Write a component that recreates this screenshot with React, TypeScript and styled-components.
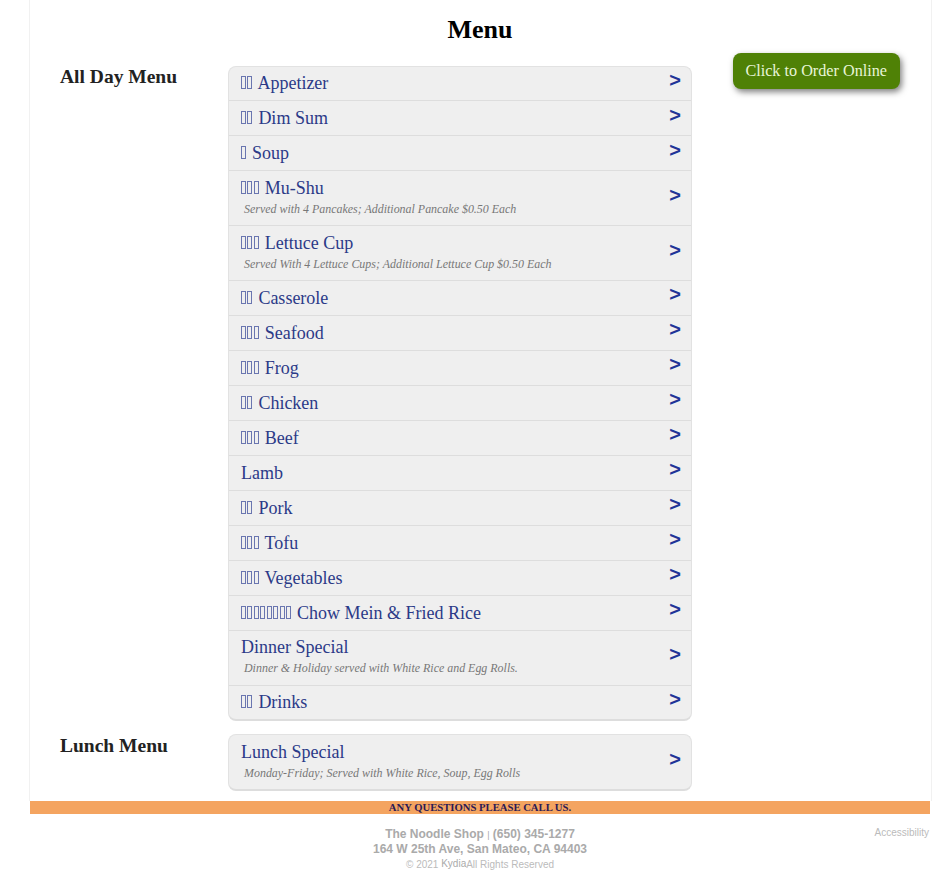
import React from 'react';
import styled, { createGlobalStyle } from 'styled-components';

const GlobalStyle = createGlobalStyle`
  html, body {
    margin: 0;
    padding: 0;
    background: #fff;
    font-family: "Liberation Serif", serif;
  }
`;

const Page = styled.div`
  width: 900px;
  margin-left: 30px;
  height: 877px;
`;

const Frame = styled.div`
  height: 801px;
  margin-right: -1px;
  padding-right: 1px;
  box-shadow: -1px 0 0 #f1f1f1, 1px 0 0 #f1f1f1;
`;

const Title = styled.h1`
  margin: 0;
  padding-top: 15px;
  height: 51px;
  font-size: 26px;
  line-height: 30px;
  font-weight: bold;
  text-align: center;
  color: #000;
`;

const Columns = styled.div`
  display: grid;
  grid-template-columns: 168px 464px 1fr;
  padding-left: 30px;
`;

const SectionName = styled.h2<{ $top?: number }>`
  margin: 0;
  padding-top: ${(p) => p.$top ?? 0}px;
  font-size: 19.5px;
  line-height: 22px;
  font-weight: bold;
  color: #222;
`;

const MenuList = styled.ul<{ $gap: number }>`
  list-style: none;
  margin: 0 0 ${(p) => p.$gap}px;
  padding: 0;
  background: #efefef;
  border: 1px solid #e2e2e2;
  border-bottom: 2px solid #ddd;
  border-radius: 8px;
  overflow: hidden;
  box-sizing: border-box;
`;

const Row = styled.li<{ $tall?: boolean }>`
  display: flex;
  align-items: center;
  justify-content: space-between;
  box-sizing: border-box;
  height: ${(p) => (p.$tall ? 55 : 35)}px;
  padding: 0 10px 0 12px;
  border-bottom: 1px solid #ddd;
  &:first-child:not(:last-child) {
    height: 34px;
  }
  &:last-child {
    height: ${(p) => (p.$tall ? 54 : 33)}px;
    border-bottom: 0;
  }
`;

const RowText = styled.div<{ $lift: number }>`
  min-width: 0;
  padding-bottom: ${(p) => p.$lift}px;
`;

const RowName = styled.div`
  font-size: 18px;
  line-height: 21px;
  color: #2b3a88;
  white-space: nowrap;
`;

// Chinese names show as empty boxes on the source page, no font for them there
const MissingGlyph = styled.span`
  display: inline-block;
  box-sizing: border-box;
  width: 5px;
  height: 13px;
  margin-right: 1.45px;
  border: 1px solid #6a76b0;
  vertical-align: 0;
`;

const Note = styled.div`
  font-size: 11.95px;
  line-height: 14px;
  margin-top: 3px;
  padding-left: 3px;
  font-style: italic;
  color: #777;
  white-space: nowrap;
`;

const Arrow = styled.span<{ $low?: boolean }>`
  font-family: "Liberation Sans", sans-serif;
  font-size: 20px;
  line-height: 23px;
  font-weight: bold;
  color: #1f3497;
  padding-bottom: ${(p) => (p.$low ? 5 : 7)}px;
`;

const OrderColumn = styled.div`
  display: flex;
  justify-content: flex-end;
  align-items: flex-start;
  padding-right: 30px;
`;

const OrderButton = styled.a`
  display: block;
  margin-top: -13px;
  padding: 9px 13px 9px 12px;
  font-size: 16.2px;
  line-height: 18px;
  color: #e8f5d8;
  background: #4f8106;
  border-radius: 8px;
  box-shadow: 2px 3px 6px rgba(0, 0, 0, 0.5);
  white-space: nowrap;
`;

const NoticeBar = styled.div`
  height: 13px;
  background: #f4a460;
  text-align: center;
  font-size: 10.67px;
  line-height: 13px;
  font-weight: bold;
  color: #2b1a55;
`;

const Footer = styled.footer`
  display: grid;
  grid-template-columns: 1fr auto 1fr;
  padding-top: 13px;
  font-family: "Liberation Sans", sans-serif;
`;

const Address = styled.div`
  text-align: center;
  font-size: 12px;
  line-height: 14px;
  font-weight: bold;
  color: #aaa;
`;

const Divider = styled.span`
  font-weight: normal;
  font-size: 9px;
`;

const Copyright = styled.div`
  margin-top: 2px;
  font-size: 10px;
  line-height: 14px;
  font-weight: normal;
  color: #bbb;
`;

const Vendor = styled.span`
  position: relative;
  top: -1px;
  color: #aaa;
`;

const Accessibility = styled.a`
  justify-self: end;
  font-size: 10px;
  line-height: 12px;
  color: #bbb;
  padding-right: 1px;
`;

type Item = { boxes?: number; name: string; note?: string; low?: boolean; lift?: number };

const allDay: Item[] = [
  { boxes: 2, name: 'Appetizer' },
  { boxes: 2, name: 'Dim Sum', low: true },
  { boxes: 1, name: 'Soup', low: true },
  { boxes: 3, name: 'Mu-Shu', note: 'Served with 4 Pancakes; Additional Pancake $0.50 Each', low: true, lift: 2 },
  { boxes: 3, name: 'Lettuce Cup', note: 'Served With 4 Lettuce Cups; Additional Lettuce Cup $0.50 Each', low: true, lift: 2 },
  { boxes: 2, name: 'Casserole' },
  { boxes: 3, name: 'Seafood' },
  { boxes: 3, name: 'Frog' },
  { boxes: 2, name: 'Chicken' },
  { boxes: 3, name: 'Beef' },
  { name: 'Lamb' },
  { boxes: 2, name: 'Pork' },
  { boxes: 3, name: 'Tofu' },
  { boxes: 3, name: 'Vegetables' },
  { boxes: 8, name: 'Chow Mein & Fried Rice' },
  { name: 'Dinner Special', note: 'Dinner & Holiday served with White Rice and Egg Rolls.', lift: 4 },
  { boxes: 2, name: 'Drinks' },
];

const lunch: Item[] = [
  { name: 'Lunch Special', note: 'Monday-Friday; Served with White Rice, Soup, Egg Rolls', low: true, lift: 2 },
];

const MenuRows = ({ items }: { items: Item[] }) => (
  <>
    {items.map((item) => (
      <Row key={item.name} $tall={!!item.note}>
        <RowText $lift={item.lift ?? 0}>
          <RowName>
            {Array.from({ length: item.boxes ?? 0 }, (_, i) => (
              <MissingGlyph key={i} />
            ))}
            {item.boxes ? ' ' : ''}
            {item.name}
          </RowName>
          {item.note && <Note>{item.note}</Note>}
        </RowText>
        <Arrow $low={item.low}>&gt;</Arrow>
      </Row>
    ))}
  </>
);

export default function App() {
  return (
    <Page>
      <GlobalStyle />
      <Frame>
        <Title>Menu</Title>
        <Columns>
          <SectionName>All Day Menu</SectionName>
          <MenuList $gap={13}>
            <MenuRows items={allDay} />
          </MenuList>
          <OrderColumn>
            <OrderButton>Click to Order Online</OrderButton>
          </OrderColumn>
          <SectionName $top={1}>Lunch Menu</SectionName>
          <MenuList $gap={0}>
            <MenuRows items={lunch} />
          </MenuList>
        </Columns>
      </Frame>
      <NoticeBar>ANY QUESTIONS PLEASE CALL US.</NoticeBar>
      <Footer>
        <span />
        <Address>
          The Noodle Shop <Divider>|</Divider> (650) 345-1277
          <br />
          164 W 25th Ave, San Mateo, CA 94403
          <Copyright>
            © 2021 <Vendor>Kydia</Vendor>All Rights Reserved
          </Copyright>
        </Address>
        <Accessibility>Accessibility</Accessibility>
      </Footer>
    </Page>
  );
}
